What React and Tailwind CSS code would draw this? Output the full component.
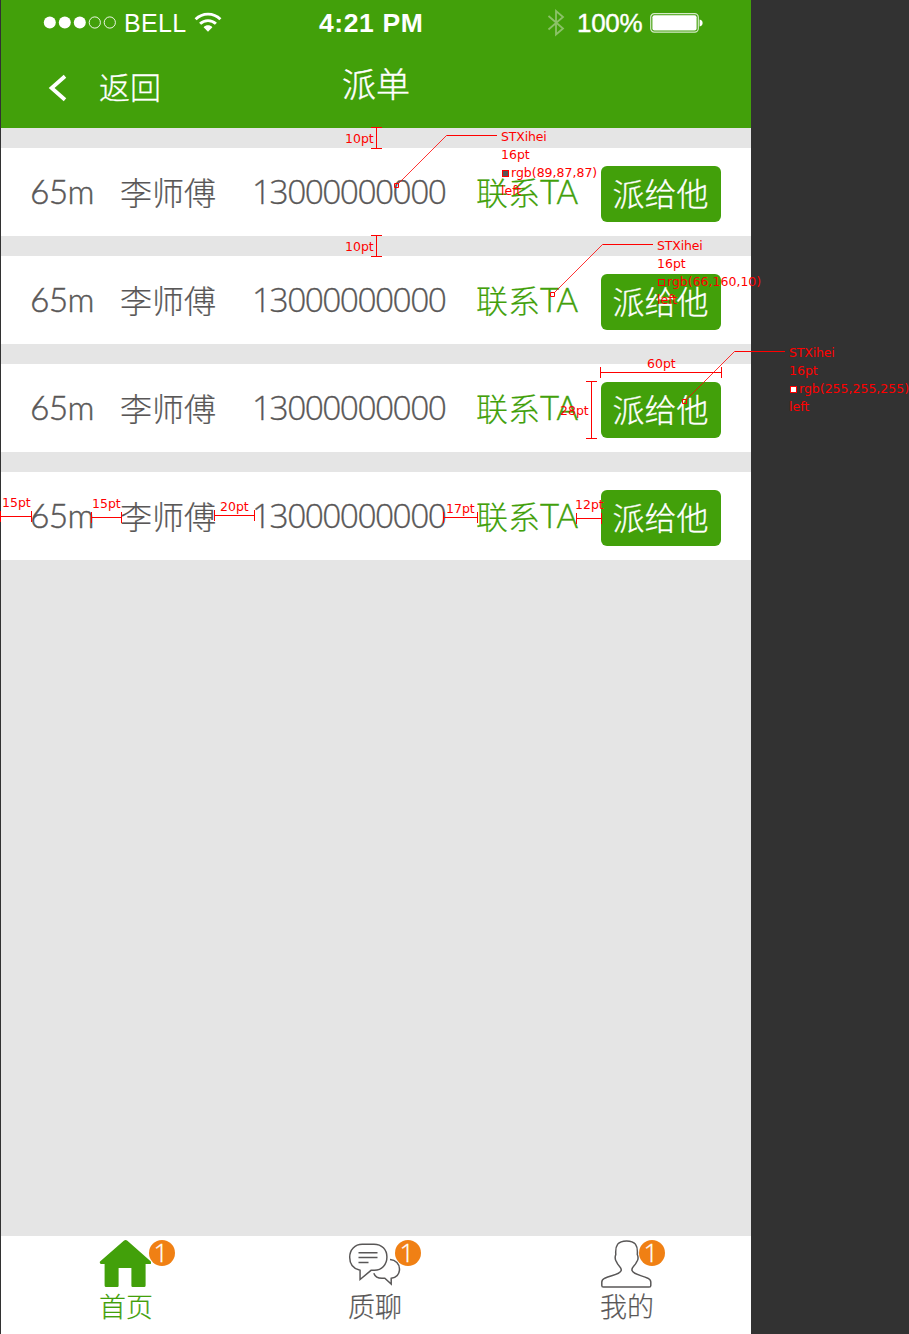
import React from "react";

const cjk = "font-['Noto_Sans_CJK_SC',sans-serif] font-light";
const latin = "font-['Lato','Noto_Sans_CJK_SC',sans-serif] font-light [-webkit-text-stroke:0.45px]";
const digits = "font-['Open_Sans','Noto_Sans_CJK_SC',sans-serif] font-light [-webkit-text-stroke:0.3px]";

function StatusBar() {
  return (
    <div className="flex h-11 items-center text-white">
      <svg className="ml-[42px] h-4 w-[76px] shrink-0" viewBox="0 0 76 16" fill="#fff">
        <circle cx="6.8" cy="8.5" r="6" />
        <circle cx="21.8" cy="8.5" r="6" />
        <circle cx="36.8" cy="8.5" r="6" />
        <circle cx="51.8" cy="8.5" r="5.6" fill="none" stroke="#fff" strokeWidth="0.9" />
        <circle cx="66.8" cy="8.5" r="5.6" fill="none" stroke="#fff" strokeWidth="0.9" />
      </svg>
      <span className="ml-[5px] mt-0.5 w-[70px] font-['Liberation_Sans',sans-serif] text-[25px] leading-none tracking-[0.3px]">BELL</span>
      <svg className="mt-0.5 h-[22px] w-7 shrink-0" viewBox="0 0 28 22" fill="none" stroke="#fff" strokeWidth="2.9">
        <path d="M1.6 7.2C8.5 0.4 19.5 0.4 26.4 7.2" />
        <path d="M6.1 11.8C10.5 7.5 17.5 7.5 21.9 11.8" />
        <path d="M9.6 15.2C12 12.7 16 12.7 18.4 15.2L14 19.7Z" fill="#fff" stroke="none" />
      </svg>
      <span className="ml-[97px] mt-0.5 w-[228px] font-['Liberation_Sans',sans-serif] text-[26.5px] font-bold leading-none tracking-[0.6px]">4:21 PM</span>
      <svg className="mt-px h-7 w-[18px] shrink-0" viewBox="0 0 18 28" fill="none" stroke="#8cc269" strokeWidth="1.8">
        <path d="M1.5 7L16 19.5L9 25.5V2L16 8L1.5 20.5" />
      </svg>
      <span className="ml-[12px] mt-0.5 w-[73px] font-['Liberation_Sans',sans-serif] text-[26px] leading-none tracking-[-0.3px] [-webkit-text-stroke:0.4px]">100%</span>
      <svg className="mt-0.5 h-5 w-[54px] shrink-0" viewBox="0 0 54 20">
        <rect x="0.7" y="0.7" width="47.6" height="18.4" rx="3.6" fill="none" stroke="#d5eac9" strokeWidth="1.2" />
        <rect x="2.4" y="2.3" width="44.2" height="15.2" rx="2" fill="#fff" />
        <path d="M49.6 6.4C53.6 6.8 53.6 13 49.6 13.4Z" fill="#fff" />
      </svg>
    </div>
  );
}

function NavBar() {
  return (
    <div className={`flex h-[84px] items-center text-white ${cjk}`}>
      <svg className="ml-[46px] mt-[3px] h-7 w-5 shrink-0" viewBox="0 0 20 28" fill="none" stroke="#fff" strokeWidth="3.8">
        <path d="M18 2.3L4.6 14L18 25.7" />
      </svg>
      <span className="ml-8 -mt-0.5 w-[243px] text-[31px] leading-none [-webkit-text-stroke:0.3px]">返回</span>
      <h1 className="-mt-[7px] text-[34px] font-light leading-none [-webkit-text-stroke:0.4px]">派单</h1>
    </div>
  );
}

function DriverRow() {
  return (
    <li className="flex h-[88px] items-center bg-white text-[32px] leading-none text-[#595757]">
      <span className={`-mt-px ml-[29px] w-[90px] text-[33.5px] tracking-[-0.7px] ${latin}`}>65m</span>
      <span className={`-mt-0.5 w-[132px] [-webkit-text-stroke:0.2px] ${cjk}`}>李师傅</span>
      <span className={`-mt-px w-[224px] text-[33.5px] tracking-[-1.55px] ${digits}`}>13000000000</span>
      <a className={`-mt-px w-[125px] whitespace-nowrap text-[#42a00a] [-webkit-text-stroke:0.2px] ${cjk}`}>
        联系<span className={`relative -top-px text-[33px] tracking-[-0.3px] ${latin}`}>TA</span>
      </a>
      <button className={`mt-1 flex h-14 w-[120px] shrink-0 items-center justify-center rounded-md bg-[#42a00a] pb-1 pr-px text-white [-webkit-text-stroke:0.3px] ${cjk}`}>派给他</button>
    </li>
  );
}

function HomeIcon() {
  return (
    <svg className="h-12 w-[52px]" viewBox="-0.6 0 52 48" fill="#42a00a">
      <path d="M24.2 0.7Q26 -0.6 27.8 0.7L51 21.3Q52 22.5 51 24H46V45.5Q46 47 44.5 47H33Q31.8 47 31.8 45.8V28H19V45.8Q19 47 17.8 47H6.5Q5 47 5 45.5V24H1.2Q-0.6 22.6 0.7 21.3Z" />
    </svg>
  );
}

function ChatIcon() {
  return (
    <svg className="h-12 w-[54px]" viewBox="-0.5 0.5 54 48" fill="none" stroke="#595757" strokeWidth="1.5">
      <path d="M14 4.7H26C34 4.7 39.2 10 39.2 17.5C39.2 25 34 30.8 26.5 30.8H23L11.8 40V30.8C5 29.3 1.2 24.5 1.2 17.7C1.2 10.3 6.5 4.7 14 4.7Z" transform="scale(0.98 1)" />
      <path d="M10 13.2H29M10 18H29M10 23H20" />
      <path d="M41.5 20.1C47.2 20.5 51 24.3 51 29.5C51 34.3 48 38 42.7 38.8V44.5L36.3 38.8H33.5C29.5 38.8 26.5 37 25.3 33.7" />
    </svg>
  );
}

function UserIcon() {
  return (
    <svg className="h-12 w-[52px]" viewBox="-0.6 0 52 48" fill="none" stroke="#595757" strokeWidth="1.5">
      <path d="M26 0.9C17.5 0.9 14.4 5 15.2 14.5C14 17.5 14.6 20 16 22C17.6 26.4 20.7 26.5 20.7 30C20.4 34 12 35 4.2 38.2Q1.2 39.7 1.2 42V45.5Q1.2 47.1 2.8 47.1H48.6Q50.2 47.1 50.2 45.5V42Q50.2 39.7 47.2 38.2C39.4 35 31.8 34 31.3 30C31.3 26.5 34.2 26.4 36 22C37.6 20 38 17.5 36.7 14.5C37.5 5 34.4 0.9 26 0.9Z" />
    </svg>
  );
}

function Tab({ icon, label, spot, badge, tint }) {
  return (
    <a className={`relative w-[54px] pt-1 ${spot} ${tint} ${cjk}`}>
      {icon}
      <span className="mt-[4px] block whitespace-nowrap text-[27px] leading-none [-webkit-text-stroke:0.2px]">{label}</span>
      <span className={`absolute top-1 flex size-[26px] items-center justify-center rounded-full bg-[#f08014] pb-0.5 pr-0.5 text-[26px] leading-none text-white ${badge} ${digits}`}>1</span>
    </a>
  );
}

const gaps = [
  { text: "10pt", place: "left-[345px] top-[130px]" },
  { text: "10pt", place: "left-[345px] top-[238px]" },
  { text: "60pt", place: "left-[647px] top-[355px]" },
  { text: "28pt", place: "left-[560px] top-[402px]" },
  { text: "15pt", place: "left-[2px] top-[494px]" },
  { text: "15pt", place: "left-[92px] top-[495px]" },
  { text: "20pt", place: "left-[220px] top-[498px]" },
  { text: "17pt", place: "left-[446px] top-[500px]" },
  { text: "12pt", place: "left-[575px] top-[496px]" },
];

const notes = [
  { rgb: "rgb(89,87,87)", place: "left-[501px] top-[128px]", swatch: "bg-[#595757]" },
  { rgb: "rgb(66,160,10)", place: "left-[657px] top-[237px]", swatch: "bg-[#42a00a]" },
  { rgb: "rgb(255,255,255)", place: "left-[789px] top-[344px]", swatch: "bg-white" },
];

function Annotations() {
  return (
    <div className="pointer-events-none absolute inset-0 overflow-hidden font-['DejaVu_Sans',sans-serif] text-[12.5px] text-[#ff0000]">
      <svg className="absolute inset-0 h-[1334px] w-[909px]" viewBox="0 0 909 1334" fill="none" stroke="#ff0000" strokeWidth="1">
        <path d="M371 127.5H382M371 148.5H382M376.5 127V149M371 235.5H382M371 256.5H382M376.5 235V257" />
        <path d="M600.5 367V378M721.5 367V378M600 372.5H722M586 381.5H597M586 438.5H597M591.5 381V439" />
        <path d="M0.5 511V522M31.5 511V522M0 516.5H32M91.5 512V523M121.5 512V523M91 517.5H122M214.5 510V521M254.5 510V521M214 515.5H255" />
        <path d="M443.5 512V523M477.5 512V523M443 517.5H478M576.5 513V524M601.5 513V524M576 518.5H602" />
        <path d="M446.5 135.5H497M602.5 244.5H653M734.5 351.5H785" />
        <path d="M446.5 135.5L398 184M602.5 244.5L554 293M734.5 351.5L686 400" strokeWidth="0.8" />
        <path d="M394.5 183.5h4v4h-4zM550.5 292.5h4v4h-4zM682.5 399.5h4v4h-4z" />
      </svg>
      {gaps.map((g) => (
        <span key={g.place} className={`absolute leading-[18px] ${g.place}`}>{g.text}</span>
      ))}
      {notes.map((n) => (
        <div key={n.rgb} className={`absolute whitespace-nowrap leading-[18px] ${n.place}`}>
          <p className="tracking-[-0.15px]">STXihei</p>
          <p>16pt</p>
          <p className="flex items-center">
            <i className={`ml-px mr-[2px] size-[7px] shrink-0 border border-[#ff0000] ${n.swatch}`} />
            {n.rgb}
          </p>
          <p>left</p>
        </div>
      ))}
    </div>
  );
}

export default function App() {
  return (
    <div className="relative h-[1334px] w-[909px] overflow-hidden bg-[#323232] pl-px">
      <div className="flex h-full w-[750px] flex-col bg-[#e5e5e5]">
        <header className="h-32 bg-[#42a00a]">
          <StatusBar />
          <NavBar />
        </header>
        <ul className="flex flex-1 flex-col gap-5 pt-5">
          <DriverRow />
          <DriverRow />
          <DriverRow />
          <DriverRow />
        </ul>
        <nav className="flex h-[98px] bg-white">
          <Tab icon={<HomeIcon />} label="首页" spot="ml-[98px]" badge="left-[50px]" tint="text-[#42a00a]" />
          <Tab icon={<ChatIcon />} label="质聊" spot="ml-[195px]" badge="left-[47px]" tint="text-[#595757]" />
          <Tab icon={<UserIcon />} label="我的" spot="ml-[198px]" badge="left-[39px]" tint="text-[#595757]" />
        </nav>
      </div>
      <Annotations />
    </div>
  );
}
